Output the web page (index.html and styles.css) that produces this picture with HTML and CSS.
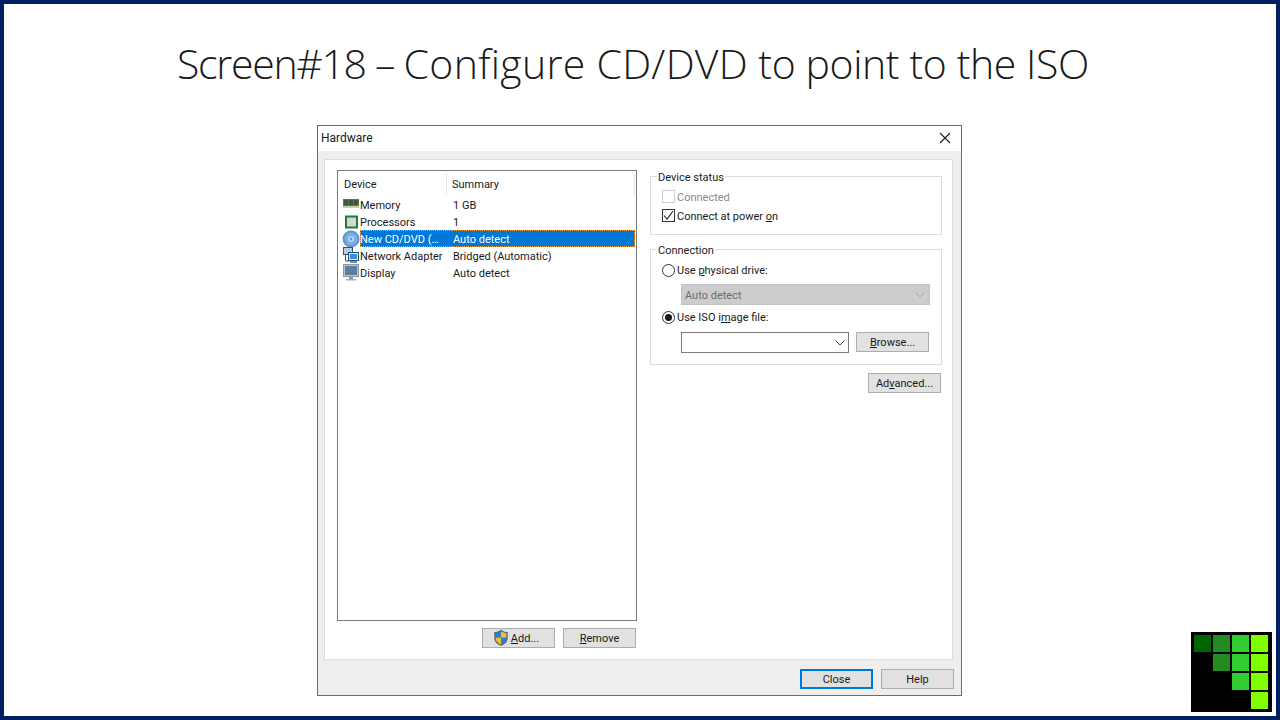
FILE: index.html
```html
<!DOCTYPE html>
<html lang="en">
<head>
<meta charset="utf-8">
<title>Screen#18</title>
<link rel="stylesheet" href="styles.css">
</head>
<body>
<main class="slide">
  <h1 class="title"><span class="t1">Screen#18 – </span><span class="t2">Configure CD/DVD</span> to point to the ISO</h1>
  <section class="dialog">
    <header class="titlebar">
      <span>Hardware</span>
      <svg class="close-x" width="12" height="12" viewBox="0 0 12 12"><path d="M1 1l10 10M11 1L1 11" stroke="#1a1a1a" stroke-width="1.1" fill="none"/></svg>
    </header>
    <div class="body">
      <div class="panel">
        <div class="left">
          <div class="list">
            <div class="list-head">
              <div class="col col-device">Device</div>
              <div class="col col-summary">Summary</div>
            </div>
            <div class="row">
              <svg class="ico" width="18" height="16" viewBox="0 0 18 16"><rect x="1" y="2" width="16" height="9" fill="#3f8a35"/><rect x="2" y="3" width="4" height="5" fill="#45504a"/><rect x="7" y="3" width="4" height="5" fill="#45504a"/><rect x="12" y="3" width="4" height="5" fill="#45504a"/><rect x="1" y="9" width="16" height="2" fill="#c3d2a4"/></svg>
              <span class="cell-device">Memory</span><span class="cell-sum">1 GB</span>
            </div>
            <div class="row">
              <svg class="ico" width="18" height="16" viewBox="0 0 18 16"><rect x="3" y="1.500" width="13" height="13" fill="#1f7a3c"/><rect x="5" y="3.500" width="9" height="9" fill="#d5d8d2"/></svg>
              <span class="cell-device">Processors</span><span class="cell-sum">1</span>
            </div>
            <div class="row selected">
              <svg class="ico" width="18" height="18" viewBox="0 0 18 18"><circle cx="9" cy="9" r="8.500" fill="#5a97d2"/><circle cx="9" cy="9" r="6.500" fill="#7db0e2"/><circle cx="9" cy="9" r="3" fill="#b4d3f0"/><circle cx="9" cy="9" r="1.200" fill="#5a97d2"/></svg>
              <span class="cell-device">New CD/DVD (…</span><span class="cell-sum">Auto detect</span>
            </div>
            <div class="row">
              <svg class="ico" width="18" height="17" viewBox="0 0 18 17"><rect x="1.500" y="0.500" width="9" height="7" fill="#b9cee2" stroke="#33506e"/><path d="M3.500 8v6h4" stroke="#33506e" fill="none"/><rect x="6.500" y="5.500" width="10" height="8" fill="#d8e6f2" stroke="#24527e"/><rect x="8" y="7" width="7" height="5" fill="#3f8fd8"/><rect x="8" y="14" width="7" height="2" fill="#7d8f9f"/></svg>
              <span class="cell-device">Network Adapter</span><span class="cell-sum">Bridged (Automatic)</span>
            </div>
            <div class="row">
              <svg class="ico" width="18" height="17" viewBox="0 0 18 17"><rect x="1.500" y="0.500" width="15" height="12" fill="#b9c3cc" stroke="#8b98a5"/><rect x="3" y="2" width="12" height="9" fill="#5d7f9f"/><rect x="7" y="13" width="4" height="2" fill="#8b98a5"/><rect x="4" y="15" width="10" height="1.500" fill="#a5afb8"/></svg>
              <span class="cell-device">Display</span><span class="cell-sum">Auto detect</span>
            </div>
          </div>
          <div class="list-actions">
            <button class="btn btn-add">
              <svg width="16" height="18" viewBox="0 0 16 18"><path d="M8 .8c2 1.600 4.200 2.200 6.700 2.300v6c0 3.700-2.800 6.300-6.700 8C4.100 15.400 1.300 12.800 1.300 9.100v-6C3.800 3 6 2.400 8 .8z" fill="#4d6a86"/><path d="M8 2.300v6.500H2.600V4.200C4.700 4 6.400 3.400 8 2.300z" fill="#2f80d0"/><path d="M8 2.300c1.600 1.100 3.300 1.700 5.400 1.900v4.600H8z" fill="#f5c030"/><path d="M2.600 8.800H8v7c-2.900-1.300-5.400-3.500-5.400-6.700z" fill="#f5c030"/><path d="M8 8.800h5.400v.3c0 3.200-2.500 5.400-5.400 6.700z" fill="#2f80d0"/></svg>
              <span><u>A</u>dd...</span>
            </button>
            <button class="btn"><span><u>R</u>emove</span></button>
          </div>
        </div>
        <div class="right">
          <fieldset class="group group-status">
            <legend>Device status</legend>
            <div class="check-row disabled"><span class="check"></span><span class="label">Connected</span></div>
            <div class="check-row">
              <span class="check on"><svg width="11" height="11" viewBox="0 0 11 11"><path d="M1 5.500l3 3.500 6-8" stroke="#222" stroke-width="1.100" fill="none"/></svg></span>
              <span class="label">Connect at power <u>o</u>n</span>
            </div>
          </fieldset>
          <fieldset class="group group-conn">
            <legend>Connection</legend>
            <div class="radio-row"><span class="radio"></span><span class="label">Use <u>p</u>hysical drive:</span></div>
            <div class="select disabled-select">
              <span class="label">Auto detect</span>
              <svg width="10" height="6" viewBox="0 0 10 6"><path d="M.5.500L5 5 9.500.500" stroke="#aaa" fill="none"/></svg>
            </div>
            <div class="radio-row radio-iso"><span class="radio on"></span><span class="label">Use ISO i<u>m</u>age file:</span></div>
            <div class="file-row">
              <div class="select file-select">
                <svg width="10" height="6" viewBox="0 0 10 6"><path d="M.5.500L5 5 9.500.500" stroke="#444" fill="none"/></svg>
              </div>
              <button class="btn"><span class="label"><u>B</u>rowse...</span></button>
            </div>
          </fieldset>
          <div class="advanced"><button class="btn"><span class="label">Ad<u>v</u>anced...</span></button></div>
        </div>
      </div>
      <div class="footer">
        <button class="btn btn-default"><span class="label">Close</span></button>
        <button class="btn"><span class="label">Help</span></button>
      </div>
    </div>
  </section>
  <div class="logo">
    <i class="c1"></i><i class="c2"></i><i class="c3"></i><i class="c4"></i>
    <i class="c0"></i><i class="c2"></i><i class="c3"></i><i class="c4"></i>
    <i class="c0"></i><i class="c0"></i><i class="c3"></i><i class="c4"></i>
    <i class="c0"></i><i class="c0"></i><i class="c0"></i><i class="c4"></i>
  </div>
</main>
</body>
</html>
```

FILE: styles.css
```css
* { box-sizing: border-box; }
html, body { margin: 0; padding: 0; }
body { width: 1280px; height: 720px; overflow: hidden; background: #fff; }

.slide {
  position: relative;
  width: 1280px;
  height: 720px;
  border: 4px solid #002060;
  background: #fff;
  display: flex;
  flex-direction: column;
  align-items: center;
}

.title {
  margin: 29px 14px 0 0;
  height: 92px;
  font: 300 41px/60px "Open Sans", sans-serif;
  letter-spacing: -0.4px;
  color: #1a1a1a;
  white-space: nowrap;
}
.t1 { letter-spacing: -1.3px; }
.t2 { letter-spacing: 0.29px; }

.dialog {
  width: 645px;
  height: 571px;
  margin-right: 1px;
  border: 1px solid #6d6d6d;
  background: #fff;
  display: flex;
  flex-direction: column;
  font: 11px/14px Roboto, "Noto Sans", sans-serif;
  color: #1a1a1a;
}

.label { padding-top: 2px; }

.titlebar {
  height: 25px;
  flex: none;
  display: flex;
  align-items: center;
  justify-content: space-between;
  padding: 0 10px 2px 3px;
  font-size: 12px;
  background: #fff;
}

.body {
  flex: 1;
  background: #eeeeee;
  display: flex;
  flex-direction: column;
  padding: 8px 8px 0 6px;
}

.panel {
  height: 501px;
  flex: none;
  background: #fff;
  border: 1px solid #dcdcdc;
  display: flex;
  padding: 10px 10px 0 12px;
  gap: 13px;
}

.left { width: 300px; flex: none; display: flex; flex-direction: column; }

.list {
  width: 300px;
  height: 451px;
  border: 1px solid #7a7a7a;
  background: #fff;
  padding-right: 1px;
}

.list-head { display: flex; height: 25px; padding-top: 2px; }
.col { height: 22px; line-height: 24px; border-right: 1px solid #e6e6e6; }
.col-device { width: 109px; padding-left: 6px; }
.col-summary { flex: 1; padding-left: 5px; }

.row {
  height: 17px;
  display: flex;
  align-items: center;
  padding-left: 4px;
  white-space: nowrap;
}
.ico { width: 18px; flex: none; }
.cell-device, .cell-sum { height: 17px; line-height: 15px; padding-top: 2px; }
.cell-device { width: 92px; flex: none; }
.cell-sum { padding-left: 1px; }

.selected .cell-device, .selected .cell-sum {
  color: #fff;
  background: #0078d7;
  border: 1px dotted #f0a040;
  padding-top: 1px;
}
.selected .cell-device { border-right: 0; text-indent: -1px; }
.selected .cell-sum { flex: 1; border-left: 0; }

.list-actions { display: flex; justify-content: flex-end; gap: 8px; margin: 7px 1px 0 0; }

.btn {
  font: inherit;
  color: inherit;
  display: inline-flex;
  align-items: center;
  justify-content: center;
  height: 20px;
  width: 73px;
  padding: 0;
  background: #e1e1e1;
  border: 1px solid #adadad;
  white-space: nowrap;
}
.list-actions .btn span { padding-top: 2px; }
.btn-add { gap: 2px; }
.btn-add svg { margin-left: -5px; }

.right { flex: 1; display: flex; flex-direction: column; width: 292px; }

.group {
  margin: 0;
  padding: 0;
  border: 1px solid #dcdcdc;
  min-width: 0;
  width: 292px;
}
.group legend { position: relative; top: 2px; margin-left: -5px; padding: 0 1px; line-height: 14px; }
.group-status { height: 66px; padding: 4px 0 0 11px; margin-top: -1px; }
.group-conn { height: 123px; margin-top: 7px; padding: 5px 0 0 11px; }

.check-row {
  display: flex;
  align-items: center;
  gap: 2px;
  height: 19px;
}
.disabled { color: #8a8a8a; }
.check {
  width: 13px;
  height: 13px;
  border: 1px solid #333;
  background: #fff;
  display: flex;
  align-items: center;
  justify-content: center;
  flex: none;
}
.disabled .check { border-color: #cfcfcf; }

.radio-row { display: flex; align-items: center; gap: 2px; height: 18px; }
.radio {
  width: 13px;
  height: 13px;
  border: 1px solid #333;
  border-radius: 50%;
  background: #fff;
  flex: none;
  display: flex;
  align-items: center;
  justify-content: center;
}
.radio.on::after {
  content: "";
  width: 7px;
  height: 7px;
  border-radius: 50%;
  background: #1a1a1a;
}
.radio-iso { margin-top: 3px; }

.select {
  display: flex;
  align-items: center;
  justify-content: space-between;
  height: 21px;
}
.disabled-select {
  width: 249px;
  margin: 5px 0 0 19px;
  padding: 0 3px;
  background: #cccccc;
  border: 1px solid #c4c4c4;
  color: #6d6d6d;
}
.disabled-select svg { margin-right: 1px; }
.file-row { display: flex; gap: 7px; margin: 6px 0 0 19px; align-items: flex-start; }
.file-select {
  width: 168px;
  justify-content: flex-end;
  padding-right: 3px;
  background: #fff;
  border: 1px solid #7a7a7a;
}

.advanced { display: flex; justify-content: flex-end; margin-top: 8px; padding-right: 1px; }

.footer {
  flex: 1;
  display: flex;
  justify-content: flex-end;
  align-items: flex-start;
  gap: 8px;
  margin-right: -1px;
  padding-top: 9px;
}
.btn-default { border: 2px solid #0078d7; }

.logo {
  position: absolute;
  left: 1187px;
  top: 628px;
  width: 81px;
  height: 80px;
  background: #000;
  padding: 3px;
  display: grid;
  grid-template-columns: repeat(4, 17px);
  grid-template-rows: repeat(4, 17px);
  gap: 2px;
}
.logo i { display: block; }
.c0 { background: #000; }
.c1 { background: #006400; }
.c2 { background: #228b22; }
.c3 { background: #32cd32; }
.c4 { background: #7fff00; }
```
